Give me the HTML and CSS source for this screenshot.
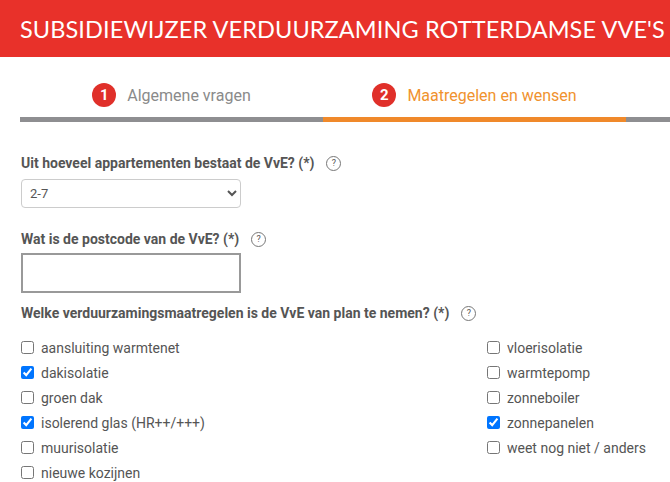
FILE: index.html
```html
<!DOCTYPE html>
<html lang="nl">
<head>
  <meta charset="UTF-8">
  <meta name="viewport" content="width=device-width, initial-scale=1.0">
  <title>Subsidiewijzer verduurzaming Rotterdamse VvE's</title>
  <link rel="stylesheet" href="styles.css">
</head>
<body>
  <div class="page">
    <header class="top-bar">
      <h1>SUBSIDIEWIJZER VERDUURZAMING ROTTERDAMSE VVE'S</h1>
    </header>

    <div class="steps">
      <div class="step">
        <span class="step-nr">1</span>
        <span class="step-title">Algemene vragen</span>
      </div>
      <div class="step active">
        <span class="step-nr">2</span>
        <span class="step-title">Maatregelen en wensen</span>
      </div>
      <div class="step step-rest"></div>
    </div>

    <form class="wizard-form">
      <div class="field field-select">
        <label class="field-label" for="aantal">Uit hoeveel appartementen bestaat de VvE? (*) <span class="help">?</span></label>
        <select id="aantal" class="select-box">
          <option>2-7</option>
          <option>8-20</option>
          <option>21-50</option>
          <option>meer dan 50</option>
        </select>
      </div>

      <div class="field field-text">
        <label class="field-label" for="postcode">Wat is de postcode van de VvE? (*) <span class="help">?</span></label>
        <input type="text" id="postcode" class="text-box">
      </div>

      <div class="field">
        <p class="field-label">Welke verduurzamingsmaatregelen is de VvE van plan te nemen? (*) <span class="help">?</span></p>
        <div class="check-grid">
          <div class="check-col">
            <label class="check"><input type="checkbox"> aansluiting warmtenet</label>
            <label class="check"><input type="checkbox" checked> dakisolatie</label>
            <label class="check"><input type="checkbox"> groen dak</label>
            <label class="check"><input type="checkbox" checked> isolerend glas (HR++/+++)</label>
            <label class="check"><input type="checkbox"> muurisolatie</label>
            <label class="check"><input type="checkbox"> nieuwe kozijnen</label>
          </div>
          <div class="check-col">
            <label class="check"><input type="checkbox"> vloerisolatie</label>
            <label class="check"><input type="checkbox"> warmtepomp</label>
            <label class="check"><input type="checkbox"> zonneboiler</label>
            <label class="check"><input type="checkbox" checked> zonnepanelen</label>
            <label class="check"><input type="checkbox"> weet nog niet / anders</label>
          </div>
        </div>
      </div>
    </form>
  </div>
</body>
</html>
```

FILE: styles.css
```css
body {
  margin: 0;
  padding: 0;
  font-family: Roboto, "Liberation Sans", sans-serif;
  background-color: #fff;
  color: #555;
}

.page {
  width: 670px;
  height: 482px;
  overflow: hidden;
}

.top-bar {
  background-color: #e8312a;
  height: 57px;
  padding: 0 0 0 20px;
  display: flex;
  align-items: center;
}

.top-bar h1 {
  margin: 0;
  font-family: Lato, "Open Sans", sans-serif;
  font-weight: 400;
  font-size: 23.5px;
  color: #fff;
  white-space: nowrap;
  letter-spacing: 0.1px;
}

.steps {
  display: flex;
  margin: 0 0 0 20px;
  width: 910px;
}

.step {
  flex: 0 0 303px;
  height: 65px;
  display: flex;
  align-items: center;
  justify-content: center;
  gap: 11px;
  border-bottom: 5px solid #8e8e91;
  box-sizing: border-box;
  padding-top: 16px;
  color: #8a8a8a;
  font-size: 16px;
}

.step.active {
  border-bottom-color: #f0892a;
  color: #f0922e;
}

.step-nr {
  width: 24px;
  height: 24px;
  border-radius: 50%;
  background-color: #e0302a;
  color: #fff;
  font-weight: 700;
  font-size: 15px;
  display: flex;
  align-items: center;
  justify-content: center;
}

.wizard-form {
  padding: 33px 21px 0 21px;
}

.field-select {
  margin-bottom: 23px;
}

.field-text {
  margin-bottom: 12px;
}

.field-label {
  display: flex;
  align-items: center;
  gap: 12px;
  margin: 0 0 8px 0;
  font-size: 14px;
  line-height: 16px;
  font-weight: 700;
  color: #555;
}

.field-text .field-label {
  margin-bottom: 6px;
}

.help {
  width: 13px;
  height: 13px;
  border: 1px solid #777;
  border-radius: 50%;
  font-size: 9px;
  font-weight: 400;
  display: inline-flex;
  align-items: center;
  justify-content: center;
  color: #555;
}

.select-box {
  width: 220px;
  height: 29px;
  border: 1px solid #ccc;
  border-radius: 4px;
  padding: 0 4px;
  font-family: Roboto, sans-serif;
  font-size: 13px;
  color: #555;
  background-color: #fff;
}

.text-box {
  width: 220px;
  height: 40px;
  border: 2px solid #999;
  box-sizing: border-box;
  padding: 0 6px;
}

.check-grid {
  display: grid;
  grid-template-columns: 466px auto;
  padding-top: 6px;
}

.check-col {
  display: flex;
  flex-direction: column;
}

.check {
  display: flex;
  align-items: center;
  gap: 7px;
  height: 25px;
  font-size: 14px;
  color: #555;
}

.check input {
  margin: 0;
  width: 13px;
  height: 13px;
}
```
